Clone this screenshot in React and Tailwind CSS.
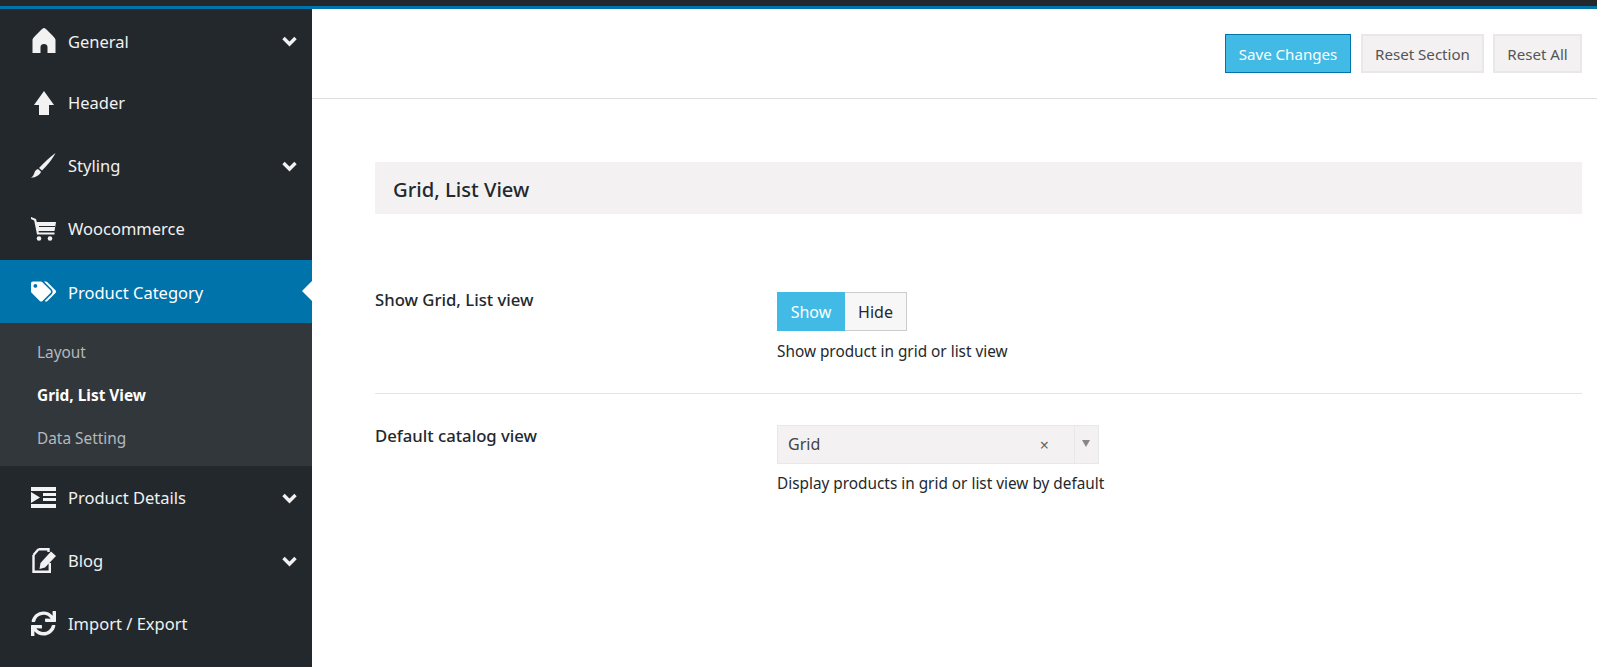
import React from 'react'
import { FaTags, FaSync } from 'react-icons/fa'

function HomeIcon() {
  return (
    <svg viewBox="0 0 24 25" className="w-[24px] h-[25px]" fill="#f2f2f2">
      <path d="M12 0 C13 0 14 1 15.5 2.5 L20 7 C22.5 9.5 23.5 10.5 23.5 12 V25 H15.5 V19 C15.5 17 14 16 12 16 C10 16 8.5 17 8.5 19 V25 H0.5 V12 C0.5 10.5 1.5 9.5 4 7 L8.5 2.5 C10 1 11 0 12 0 Z" />
    </svg>
  )
}

function ArrowIcon() {
  return (
    <svg viewBox="0 0 20 24" className="w-[20px] h-[24px]" fill="#f2f2f2">
      <path d="M10 0 L20 14 H15 V24 H5 V14 H0 Z" />
    </svg>
  )
}

function BrushIcon() {
  return (
    <svg viewBox="0 0 25 25" className="w-[25px] h-[25px]" fill="#f2f2f2">
      <path d="M24.5 0 C22 5 17 11.5 11 17.5 L8 15 C13 9.5 19 4 24.5 0 Z" />
      <path d="M7 16 L10 18.8 C9 22 5 24.5 0 24.8 C2.5 23 3 21 3.5 19.5 C4 17.5 5.5 16.5 7 16 Z" />
    </svg>
  )
}

function CartIcon() {
  return (
    <svg viewBox="0 0 25 24" className="w-[25px] h-[24px]" fill="#f2f2f2">
      <path d="M0 0 L5 2 L5.8 5 H25 L23.5 14 H7.5 L7.8 15.5 H23.5 V17.5 H6 L3.2 3.5 L0 2 Z" />
      <path d="M8 9 H24 V10 H8 Z" fill="#23282d" />
      <circle cx="8" cy="21.5" r="2.3" />
      <circle cx="19" cy="21.5" r="2.3" />
    </svg>
  )
}

function DetailsIcon() {
  return (
    <svg viewBox="0 0 25 21" className="w-[25px] h-[21px]" fill="#f2f2f2">
      <path d="M0 0 H25 V4 H0 Z M12 6 H25 V9 H12 Z M12 11 H25 V14 H12 Z M0 17 H25 V21 H0 Z M0 5 L9 10.5 L0 16 Z" />
    </svg>
  )
}

function BlogIcon() {
  return (
    <svg viewBox="0 0 24 25" className="w-[24px] h-[25px]" fill="none">
      <path d="M6.5 1.2 H16.5 V4 M1.5 7 L6.5 1.2 M1.5 7 V23.8 H17.8 V15" stroke="#f2f2f2" strokeWidth="2.4" />
      <path d="M19 3.5 L24 8 L13 19.5 L7.5 21 L8.5 15 Z" fill="#f2f2f2" />
    </svg>
  )
}

function Chevron() {
  return (
    <svg viewBox="0 0 15 11" className="w-[15px] h-[11px] mt-[2px]" fill="none">
      <path d="M1.5 2 L7.5 8 L13.5 2" stroke="#f2f2f2" strokeWidth="3.4" />
    </svg>
  )
}

const menuTop = [
  { name: 'General', icon: <HomeIcon />, arrow: true },
  { name: 'Header', icon: <ArrowIcon /> },
  { name: 'Styling', icon: <BrushIcon />, arrow: true },
  { name: 'Woocommerce', icon: <CartIcon /> },
]

const menuBottom = [
  { name: 'Product Details', icon: <DetailsIcon />, arrow: true },
  { name: 'Blog', icon: <BlogIcon />, arrow: true },
  { name: 'Import / Export', icon: <FaSync size={25} color="#f2f2f2" /> },
]

function MenuItem({ item }) {
  return (
    <div className="group h-[63px] first:h-[62px] flex items-center pl-[31px] pr-[15px] text-[#f1f1f1]">
      <span className="w-[25px] flex justify-center">{item.icon}</span>
      <span className="ml-[12px] pt-[2px] group-first:pt-[4px] flex-1 text-[16.5px]">{item.name}</span>
      {item.arrow && <Chevron />}
    </div>
  )
}

export default function App() {
  return (
    <div
      className="h-[667px] overflow-hidden bg-white text-[#23282d] flex flex-col"
      style={{ fontFamily: '"Noto Sans", sans-serif' }}
    >
      <div className="h-[6px] bg-[#23282d]" />
      <div className="h-[3px] bg-[#0073aa]" />
      <div className="flex flex-1">
        {/* Sidebar */}
        <div className="w-[312px] bg-[#23282d]">
          {menuTop.map((item) => (
            <MenuItem key={item.name} item={item} />
          ))}
          <div className="h-[63px] flex items-center pl-[31px] bg-[#0073aa] text-white relative">
            <span className="w-[25px] flex justify-center">
              <FaTags size={25} color="#fff" />
            </span>
            <span className="ml-[12px] pt-[3px] text-[16.5px]">Product Category</span>
            <span className="absolute right-0 top-[21px] border-y-[10px] border-y-transparent border-r-[10px] border-r-white" />
          </div>
          <div className="h-[143px] bg-[#32373c] pt-[8px] pl-[37px] text-[15.4px] text-[#b4b9be]">
            <div className="h-[43px] flex items-center">Layout</div>
            <div className="h-[43px] flex items-center font-bold text-white">Grid, List View</div>
            <div className="h-[43px] flex items-center">Data Setting</div>
          </div>
          {menuBottom.map((item) => (
            <MenuItem key={item.name} item={item} />
          ))}
        </div>

        {/* Main */}
        <div className="flex-1">
          <div className="h-[90px] border-b border-[#dfdfdf] flex justify-end items-start pt-[25px] pr-[15px] text-[15.1px]">
            <button className="h-[39px] w-[126px] pt-[2px] bg-[#41bbe5] border border-[#0073aa] text-white">Save Changes</button>
            <button className="h-[39px] w-[123px] pt-[2px] ml-[10px] bg-[#f3f1f2] border-2 border-[#e8e8e8] text-[#555]">Reset Section</button>
            <button className="h-[39px] w-[89px] pt-[2px] ml-[9px] bg-[#f3f1f2] border-2 border-[#e8e8e8] text-[#555]">Reset All</button>
          </div>
          <div className="pl-[63px] pr-[15px] pt-[63px]">
            <div className="h-[52px] bg-[#f3f1f2] flex items-center pl-[18px] pt-[3px] text-[20.2px] font-medium">Grid, List View</div>
            <div className="flex pt-[78px] h-[180px] border-b border-[#e5e5e5]">
              <div className="w-[402px] -mt-[5px] text-[16.7px] font-medium">Show Grid, List view</div>
              <div>
                <div className="flex h-[39px] w-[130px] text-[16px]">
                  <div className="w-[68px] bg-[#41bbe5] text-white flex items-center justify-center">Show</div>
                  <div className="w-[62px] bg-[#f7f7f7] border border-[#ccc] border-l-0 flex items-center justify-center">Hide</div>
                </div>
                <div className="mt-[9px] text-[15.35px]">Show product in grid or list view</div>
              </div>
            </div>
            <div className="flex pt-[31px]">
              <div className="w-[402px] -mt-[2px] text-[16.7px] font-medium">Default catalog view</div>
              <div>
                <div className="flex h-[39px] w-[322px] bg-[#f3f1f2] border border-[#e8e8e8] items-center text-[16px] text-[#444]">
                  <span className="flex-1 pl-[10px] pb-[2px]">Grid</span>
                  <span className="text-[16px] text-[#666] mr-[25px]">×</span>
                  <span className="w-[24px] h-full border-l border-[#e8e8e8] flex justify-center pt-[14px] pr-[1px]">
                    <span className="border-x-[4px] border-x-transparent border-t-[7px] border-t-[#888] h-0" />
                  </span>
                </div>
                <div className="mt-[8px] text-[15.35px]">Display products in grid or list view by default</div>
              </div>
            </div>
          </div>
        </div>
      </div>
    </div>
  )
}
